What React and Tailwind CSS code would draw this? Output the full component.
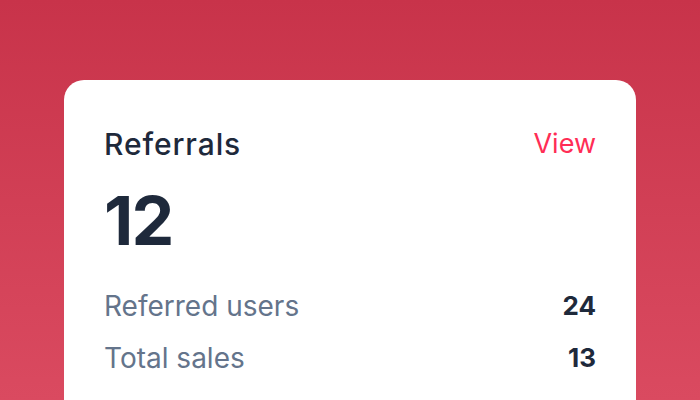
export default function App() {
  return (
    <div
      className="w-[700px] h-[400px] overflow-hidden bg-gradient-to-b from-[#c8334a] to-[#da4a60] pt-20 px-16"
      style={{ fontFamily: 'Inter, "Noto Sans", sans-serif' }}
    >
      <div className="bg-white rounded-t-[20px] h-[400px] px-10 pt-[47px]">
        <div className="flex items-center justify-between">
          <h2 className="text-[30px] leading-[34px] font-medium tracking-[0.03em] text-[#1e293b]">Referrals</h2>
          <a className="text-[27px] leading-[34px] text-[#ff2d55]">View</a>
        </div>
        <div className="mt-[23px] text-[68px] leading-[72px] font-bold text-[#1e293b] tracking-tight">12</div>
        <div className="mt-[33px] flex flex-col gap-[18px]">
          <div className="flex items-center justify-between">
            <span className="text-[28px] leading-[34px] text-[#64748b]">Referred users</span>
            <span className="text-[26px] leading-[34px] font-bold text-[#1e293b]">24</span>
          </div>
          <div className="flex items-center justify-between">
            <span className="text-[28px] leading-[34px] text-[#64748b]">Total sales</span>
            <span className="text-[26px] leading-[34px] font-bold text-[#1e293b]">13</span>
          </div>
        </div>
      </div>
    </div>
  )
}
